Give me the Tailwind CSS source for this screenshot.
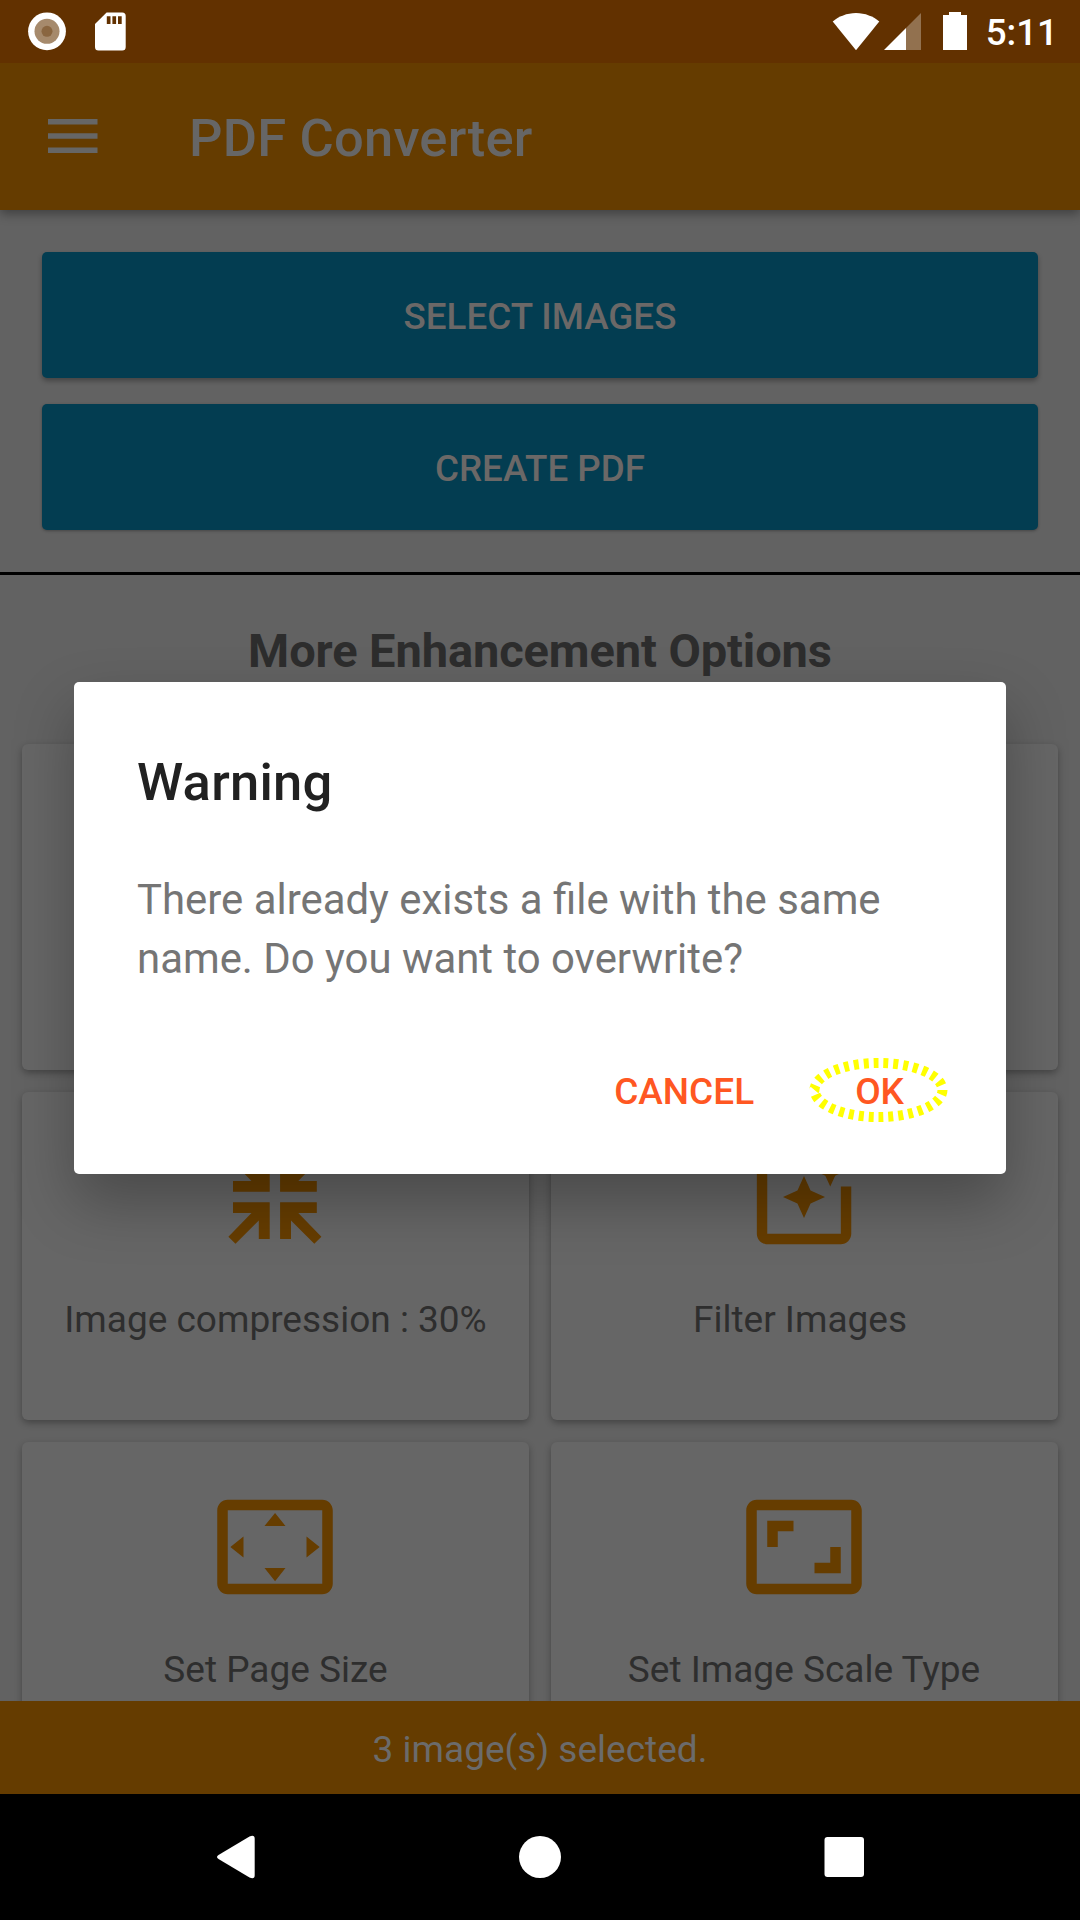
<!DOCTYPE html>
<html lang="en">
<head>
<meta charset="utf-8">
<title>PDF Converter</title>
<script src="https://cdn.jsdelivr.net/npm/@tailwindcss/browser@4"></script>
</head>
<body class="bg-black font-['Roboto',sans-serif]">
<div class="relative flex h-[1920px] w-[1080px] flex-col overflow-hidden bg-[#626262]">

  <!-- Status bar -->
  <header class="relative z-20 flex h-[63px] shrink-0 items-start justify-between bg-[#623100] text-white">
    <div class="flex">
      <svg class="ml-[28px] h-[63px] w-[38px]" viewBox="0 0 38 63"><circle cx="19" cy="31.3" r="18.9" fill="#fff"/><circle cx="19" cy="31.3" r="12.5" fill="#a68a6c"/><circle cx="19" cy="31.3" r="5.5" fill="#8a6640"/></svg>
      <svg class="ml-[29px] h-[63px] w-[31px]" viewBox="0 0 31 63"><path fill="#fff" fill-rule="evenodd" d="M11.6 12.5H27.2a3.5 3.5 0 0 1 3.5 3.5V47a3.5 3.5 0 0 1-3.5 3.5H3.500A3.5 3.5 0 0 1 0 47V24zM11.800 16.300V24h3.700V16.300zM17.400 16.300V24h3.700V16.300zM23 16.300V24h3.700V16.300z"/></svg>
    </div>
    <div class="flex pr-[22px]">
      <svg class="h-[63px] w-[136px]" viewBox="832 0 136 63">
        <path fill="#fff" d="M856 50.200 832.700 21.500C838.500 16.500 847 13 856 13s17.500 3.500 23.300 8.500z"/>
        <path fill="#92714f" d="M906 28v22h15V13z"/>
        <path fill="#fff" d="M884 50h22V28zM943 15h6v-3h12v3h6v35h-24z"/>
      </svg>
      <span class="ml-[18px] mt-[11px] text-[36.75px] leading-[44px] font-medium">5:11</span>
    </div>
  </header>

  <!-- App bar -->
  <div class="relative z-10 flex h-[147px] shrink-0 items-center bg-[#653c00] pl-12 shadow-[0_4px_10px_rgba(0,0,0,0.35)]">
    <svg class="mb-[2px] h-[34px] w-[50px]" viewBox="0 0 50 34" fill="#666"><path d="M0 0h49.500v5.500H0zM0 14.200h49.500v5.500H0zM0 28.400h49.500v5.500H0z"/></svg>
    <h1 class="ml-[91px] pt-[3px] text-[52.5px] leading-[62px] font-medium tracking-[0.2px] text-[#666]">PDF Converter</h1>
  </div>

  <!-- Scrolling content -->
  <main class="min-h-0 flex-1 overflow-hidden">
    <div class="flex flex-col gap-[26px] border-b-3 border-black p-[42px] text-[36.75px] font-medium text-[#6b6867]">
      <button class="h-[126px] rounded-[5px] bg-[#033d51] pt-[3px] shadow-[0_3px_5px_rgba(0,0,0,0.3)]">SELECT IMAGES</button>
      <button class="h-[126px] rounded-[5px] bg-[#033d51] pt-[3px] shadow-[0_1px_3px_rgba(0,0,0,0.3)]">CREATE PDF</button>
    </div>
    <h2 class="pt-[48px] text-center text-[47px] leading-[56px] font-bold tracking-[-0.1px] text-[#2d2d2d]">More Enhancement Options</h2>
    <div class="mt-[65px] grid grid-cols-2 grid-rows-[326px_328px_328px] gap-[22px] px-[22px] text-[37px] leading-[44px] text-[#2e2e2e]">
      <div class="rounded-[6px] bg-[#666] shadow-[0_3px_7px_rgba(0,0,0,0.3)]"></div>
      <div class="rounded-[6px] bg-[#666] shadow-[0_3px_7px_rgba(0,0,0,0.3)]"></div>

      <div class="flex flex-col items-center gap-[38px] rounded-[6px] bg-[#666] pt-[42px] shadow-[0_3px_7px_rgba(0,0,0,0.3)]">
        <svg class="mr-[1px] size-[126px] shrink-0" viewBox="212 1134 126 126" fill="#663d00">
          <path id="arrow" d="M233 1202.200H269.700V1239H258.800V1220.400L235.500 1243.800 228.400 1236.700 251.500 1213H233z"/>
          <use href="#arrow" transform="matrix(-1 0 0 1 549.800 0)"/>
          <use href="#arrow" transform="matrix(1 0 0 -1 0 2394)"/>
          <use href="#arrow" transform="matrix(-1 0 0 -1 549.800 2394)"/>
        </svg>
        <span>Image compression : 30%</span>
      </div>
      <div class="flex flex-col items-center gap-[38px] rounded-[6px] bg-[#666] pt-[42px] shadow-[0_3px_7px_rgba(0,0,0,0.3)]">
        <svg class="mr-[1px] size-[126px] shrink-0" viewBox="0 0 24 24" fill="#663d00"><path d="M19.020 10v9H5V5h9V3H5.020c-1.100 0-2 .9-2 2v14c0 1.100.9 2 2 2H19c1.100 0 2-.9 2-2v-9h-1.980zM17 10l.94-2.060L20 7l-2.060-.94L17 4l-.94 2.060L14 7l2.060.94zm-3.750.75L12 8l-1.250 2.750L8 12l2.750 1.250L12 16l1.250-2.750L16 12z"/></svg>
        <span class="pr-[9px]">Filter Images</span>
      </div>

      <div class="flex flex-col items-center gap-[38px] rounded-[6px] bg-[#666] pt-[42px] shadow-[0_3px_7px_rgba(0,0,0,0.3)]">
        <svg class="mr-[1px] size-[126px] shrink-0" viewBox="0 0 24 24" fill="#663d00"><path d="M12.010 5.500L10 8h4l-1.990-2.500zM18 10v4l2.500-1.990L18 10zM6 10l-2.500 2.010L6 14v-4zm8 6h-4l2.010 2.500L14 16zm7-13H3c-1.100 0-2 .9-2 2v14c0 1.100.9 2 2 2h18c1.100 0 2-.9 2-2V5c0-1.100-.9-2-2-2zm0 16.010H3V4.990h18v14.020z"/></svg>
        <span>Set Page Size</span>
      </div>
      <div class="flex flex-col items-center gap-[38px] rounded-[6px] bg-[#666] pt-[42px] shadow-[0_3px_7px_rgba(0,0,0,0.3)]">
        <svg class="mr-[1px] size-[126px] shrink-0" viewBox="0 0 24 24" fill="#663d00"><path d="M19 12h-2v3h-3v2h5v-5zM7 9h3V7H5v5h2V9zm14-6H3c-1.100 0-2 .9-2 2v14c0 1.100.9 2 2 2h18c1.100 0 2-.9 2-2V5c0-1.100-.9-2-2-2zm0 16.010H3V4.990h18v14.020z"/></svg>
        <span class="pr-[1px]">Set Image Scale Type</span>
      </div>
    </div>
  </main>

  <!-- Selection summary -->
  <div class="flex h-[93px] shrink-0 items-center justify-center bg-[#653c00] pt-[4px] text-[37px] text-[#6b6b6b]">3 image(s) selected.</div>

  <!-- System navigation -->
  <nav class="flex h-[126px] shrink-0 items-center bg-black">
    <svg class="h-[126px] w-full" viewBox="0 0 1080 126" fill="#fff">
      <path d="M218.500 61 249.500 42.600Q254.700 40.200 254.700 45V81Q254.700 85.800 249.500 83.400L218.500 65Q215.500 63 218.500 61z"/>
      <circle cx="540" cy="63" r="21"/>
      <rect x="824.500" y="43" width="39.500" height="40" rx="3"/>
    </svg>
  </nav>

  <!-- Warning dialog -->
  <div class="absolute top-[682px] left-[74px] z-30 flex h-[492px] w-[932px] flex-col rounded-[5px] bg-white px-[63px] pt-[70px] shadow-[0_28px_60px_rgba(0,0,0,0.28)]">
    <h3 class="text-[52.5px] leading-[60px] font-medium tracking-[0.25px] text-[#212121]">Warning</h3>
    <p class="mt-[58px] text-[41.9px] leading-[59px] text-[#757575]">There already exists a file with the same name. Do you want to overwrite?</p>
    <div class="mt-[82px] flex justify-end pr-[39px] text-[37px] leading-[44px] font-medium text-[#ff5722]">
      <button>CANCEL</button>
      <button class="relative ml-[101px]">OK
        <svg class="absolute top-1/2 left-1/2 h-[68px] w-[144px] max-w-none -translate-x-1/2 -translate-y-1/2" viewBox="0 0 144 68"><ellipse cx="70.500" cy="32" rx="64" ry="27" fill="none" stroke="#ff0" stroke-width="10" pathLength="300" stroke-dasharray="5 5"/></svg>
      </button>
    </div>
  </div>
</div>
</body>
</html>
